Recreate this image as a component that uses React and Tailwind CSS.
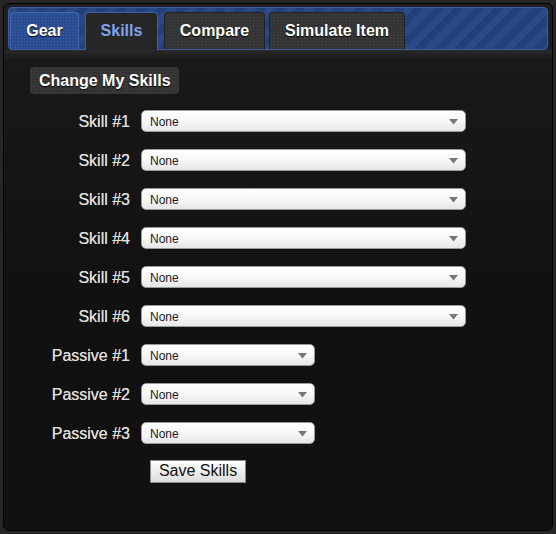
import React from "react";

const font = { fontFamily: '"Liberation Sans", Arial, Helvetica, sans-serif' };

function Select({ wide }) {
  return (
    <div
      className={`${wide ? "w-[325px]" : "w-[174px]"} h-[22px] rounded-[5px] border border-[#9a9a9a] bg-gradient-to-b from-[#ffffff] via-[#f8f8f8] to-[#e6e6e6] flex items-center justify-between pl-[8px] pr-[7px] shadow-[inset_0_1px_0_#fff]`}
    >
      <span className="text-[12px] text-[#1a1a1a] leading-none pt-[1px]">None</span>
      <svg width="9" height="6" viewBox="0 0 9 6" className="mt-[1px]">
        <path d="M0 0 L9 0 L4.5 5.5 Z" fill="#777" />
      </svg>
    </div>
  );
}

const rows = [
  ["Skill #1", true],
  ["Skill #2", true],
  ["Skill #3", true],
  ["Skill #4", true],
  ["Skill #5", true],
  ["Skill #6", true],
  ["Passive #1", false],
  ["Passive #2", false],
  ["Passive #3", false],
];

const stripes =
  "bg-[repeating-linear-gradient(135deg,#2b4985_0px,#2b4985_7px,#22407a_7px,#22407a_14px)]";
const dotsBlue =
  "bg-[#2a4c92] bg-[radial-gradient(#3a5fa8_0.6px,transparent_0.8px)] bg-[length:3px_3px]";
const dotsGray =
  "bg-[#343434] bg-[radial-gradient(#444_0.6px,transparent_0.8px)] bg-[length:3px_3px]";

export default function App() {
  return (
    <div className="w-[556px] h-[534px] bg-[#262626] p-[3px]" style={font}>
      <div className="h-full rounded-[6px] border border-black bg-[#111111] overflow-hidden flex flex-col">
        <div className="bg-[#1f1f1f] px-[4px] pt-[3px]">
          <div
            className={`h-[43px] rounded-[4px] border border-[#3d5f9f] ${stripes} flex items-end pl-[1px]`}
          >
            <div
              className={`w-[69px] h-[37px] rounded-t-[4px] border border-b-0 border-[#4468ad] ${dotsBlue} flex items-center justify-center text-white font-bold text-[16px] [text-shadow:0_1px_1px_#000]`}
            >
              Gear
            </div>
            <div className="ml-[6px] w-[73px] h-[38px] -mb-[1px] rounded-t-[4px] border border-b-0 border-[#3d5f9f] bg-[#262626] flex items-center justify-center text-[#7fa2ef] font-bold text-[16px] pb-[1px]">
              Skills
            </div>
            <div
              className={`ml-[6px] w-[101px] h-[37px] rounded-t-[4px] border border-b-0 border-[#222] ${dotsGray} flex items-center justify-center text-white font-bold text-[16px] [text-shadow:0_1px_1px_#000]`}
            >
              Compare
            </div>
            <div
              className={`ml-[4px] w-[136px] h-[37px] rounded-t-[4px] border border-b-0 border-[#222] ${dotsGray} flex items-center justify-center text-white font-bold text-[16px] [text-shadow:0_1px_1px_#000]`}
            >
              Simulate Item
            </div>
          </div>
        </div>
        <div className="h-[9px] bg-gradient-to-b from-[#2a2a2a] to-[#1a1a1a]" />
        <div className="flex-1 bg-gradient-to-b from-[#191919] via-[#111] to-[#111] pt-[8px]">
          <div
            className={`ml-[26px] w-[149px] h-[27px] rounded-[4px] ${dotsGray} flex items-center pl-[9px] text-white font-bold text-[16px] [text-shadow:0_1px_1px_#000]`}
          >
            Change My Skills
          </div>
          <div className="mt-[16px] grid grid-cols-[126px_auto] gap-x-[11px] gap-y-[17px] items-center">
            {rows.map(([label, wide]) => (
              <React.Fragment key={label}>
                <div className="text-right text-[16px] text-[#dcdcdc] leading-none pt-[2px] [text-shadow:0_0_0.4px_#dcdcdc]">
                  {label}
                </div>
                <div>
                  <Select wide={wide} />
                </div>
              </React.Fragment>
            ))}
          </div>
          <div className="ml-[146px] mt-[15px]">
            <button className="w-[96px] h-[23px] border border-[#8a8a8a] bg-gradient-to-b from-[#ffffff] to-[#dcdcdc] text-[16px] text-[#111] leading-none">
              Save Skills
            </button>
          </div>
        </div>
      </div>
    </div>
  );
}
